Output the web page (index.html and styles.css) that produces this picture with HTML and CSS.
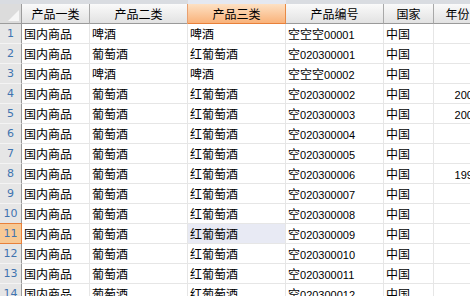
FILE: index.html
```html
<!DOCTYPE html>
<html>
<head>
<meta charset="utf-8">
<link rel="stylesheet" href="styles.css">
</head>
<body>
<div class="sheet">
  <div class="strip"><div class="strip-a"></div><div class="strip-c"></div><div class="strip-b"></div></div>
  <div class="grid">
    <div class="corner"><span class="tri"></span></div>
    <div class="ch">产品一类</div>
    <div class="ch">产品二类</div>
    <div class="ch sel">产品三类</div>
    <div class="ch">产品编号</div>
    <div class="ch">国家</div>
    <div class="ch">年份</div>

    <div class="rh">1</div><div class="c">国内商品</div><div class="c">啤酒</div><div class="c">啤酒</div><div class="c">空空空<span class="n">00001</span></div><div class="c">中国</div><div class="c r"></div>
    <div class="rh">2</div><div class="c">国内商品</div><div class="c">葡萄酒</div><div class="c">红葡萄酒</div><div class="c">空<span class="n">020300001</span></div><div class="c">中国</div><div class="c r"></div>
    <div class="rh">3</div><div class="c">国内商品</div><div class="c">啤酒</div><div class="c">啤酒</div><div class="c">空空空<span class="n">00002</span></div><div class="c">中国</div><div class="c r"></div>
    <div class="rh">4</div><div class="c">国内商品</div><div class="c">葡萄酒</div><div class="c">红葡萄酒</div><div class="c">空<span class="n">020300002</span></div><div class="c">中国</div><div class="c r"><span class="n">2008</span></div>
    <div class="rh">5</div><div class="c">国内商品</div><div class="c">葡萄酒</div><div class="c">红葡萄酒</div><div class="c">空<span class="n">020300003</span></div><div class="c">中国</div><div class="c r"><span class="n">2005</span></div>
    <div class="rh">6</div><div class="c">国内商品</div><div class="c">葡萄酒</div><div class="c">红葡萄酒</div><div class="c">空<span class="n">020300004</span></div><div class="c">中国</div><div class="c r"></div>
    <div class="rh">7</div><div class="c">国内商品</div><div class="c">葡萄酒</div><div class="c">红葡萄酒</div><div class="c">空<span class="n">020300005</span></div><div class="c">中国</div><div class="c r"></div>
    <div class="rh">8</div><div class="c">国内商品</div><div class="c">葡萄酒</div><div class="c">红葡萄酒</div><div class="c">空<span class="n">020300006</span></div><div class="c">中国</div><div class="c r"><span class="n">1998</span></div>
    <div class="rh">9</div><div class="c">国内商品</div><div class="c">葡萄酒</div><div class="c">红葡萄酒</div><div class="c">空<span class="n">020300007</span></div><div class="c">中国</div><div class="c r"></div>
    <div class="rh">10</div><div class="c">国内商品</div><div class="c">葡萄酒</div><div class="c">红葡萄酒</div><div class="c">空<span class="n">020300008</span></div><div class="c">中国</div><div class="c r"></div>
    <div class="rh rsel">11</div><div class="c">国内商品</div><div class="c">葡萄酒</div><div class="c csel">红葡萄酒</div><div class="c">空<span class="n">020300009</span></div><div class="c">中国</div><div class="c r"></div>
    <div class="rh">12</div><div class="c">国内商品</div><div class="c">葡萄酒</div><div class="c">红葡萄酒</div><div class="c">空<span class="n">020300010</span></div><div class="c">中国</div><div class="c r"></div>
    <div class="rh">13</div><div class="c">国内商品</div><div class="c">葡萄酒</div><div class="c">红葡萄酒</div><div class="c">空<span class="n">020300011</span></div><div class="c">中国</div><div class="c r"></div>
    <div class="rh">14</div><div class="c">国内商品</div><div class="c">葡萄酒</div><div class="c">红葡萄酒</div><div class="c">空<span class="n">020300012</span></div><div class="c">中国</div><div class="c r"></div>
  </div>
</div>
</body>
</html>
```
FILE: styles.css
```css
html, body {
  margin: 0;
  padding: 0;
  background: #ffffff;
  overflow: hidden;
}
.sheet {
  width: 470px;
  height: 296px;
  overflow: hidden;
  font-family: "Noto Sans CJK SC", sans-serif;
  font-size: 12px;
  color: #000;
}
.strip {
  display: flex;
  height: 4px;
}
.strip-a {
  width: 188px;
  background: #d9dce1;
}
.strip-c {
  width: 98px;
  background: #e4e8f1;
}
.strip-b {
  flex: 1;
  background: #d9dce1;
}
.grid {
  display: grid;
  grid-template-columns: 22px 68px 98px 98px 98px 50px 48px;
  grid-auto-rows: 20px;
  width: 482px;
}
.grid > div {
  box-sizing: border-box;
  white-space: nowrap;
  overflow: hidden;
  line-height: 19px;
}
.corner {
  background: #dcdcdc;
  border-right: 1px solid #9c9c9c;
  border-bottom: 1px solid #9c9c9c;
  position: relative;
}
.tri {
  position: absolute;
  right: 2px;
  bottom: 2px;
  width: 0;
  height: 0;
  border-left: 11px solid transparent;
  border-bottom: 11px solid #f6f6f6;
}
.ch {
  background: linear-gradient(#fafafa, #e2e2e2);
  border-right: 1px solid #a8a8a8;
  border-bottom: 1px solid #9a9a9a;
  text-align: center;
}
.ch.sel {
  background: linear-gradient(#fde1c4, #f9b27a);
  border-right: 1px solid #e88a45;
  border-bottom: 1px solid #e8803a;
  box-shadow: -1px 0 0 #e8a070;
}
.rh {
  background: #e6e6e6;
  border-right: 1px solid #9a9a9a;
  border-bottom: 1px solid #f4f4f4;
  color: #3f74b0;
  text-align: center;
  font-family: "DejaVu Sans", sans-serif;
  font-size: 11px;
}
.rh.rsel {
  background: #f7c995;
  border-right: 1px solid #e8803a;
  border-bottom: 1px solid #e8803a;
  box-shadow: 0 -1px 0 #e8803a;
}
.c {
  border-right: 1px solid #e6e6e6;
  border-bottom: 1px solid #e6e6e6;
  padding-left: 2px;
}
.c.r {
  text-align: right;
  padding-left: 0;
  padding-right: 2px;
}
.c.csel {
  background: #e8eaf4;
}
.n {
  font-family: "Liberation Sans", sans-serif;
  font-size: 11px;
}
```
